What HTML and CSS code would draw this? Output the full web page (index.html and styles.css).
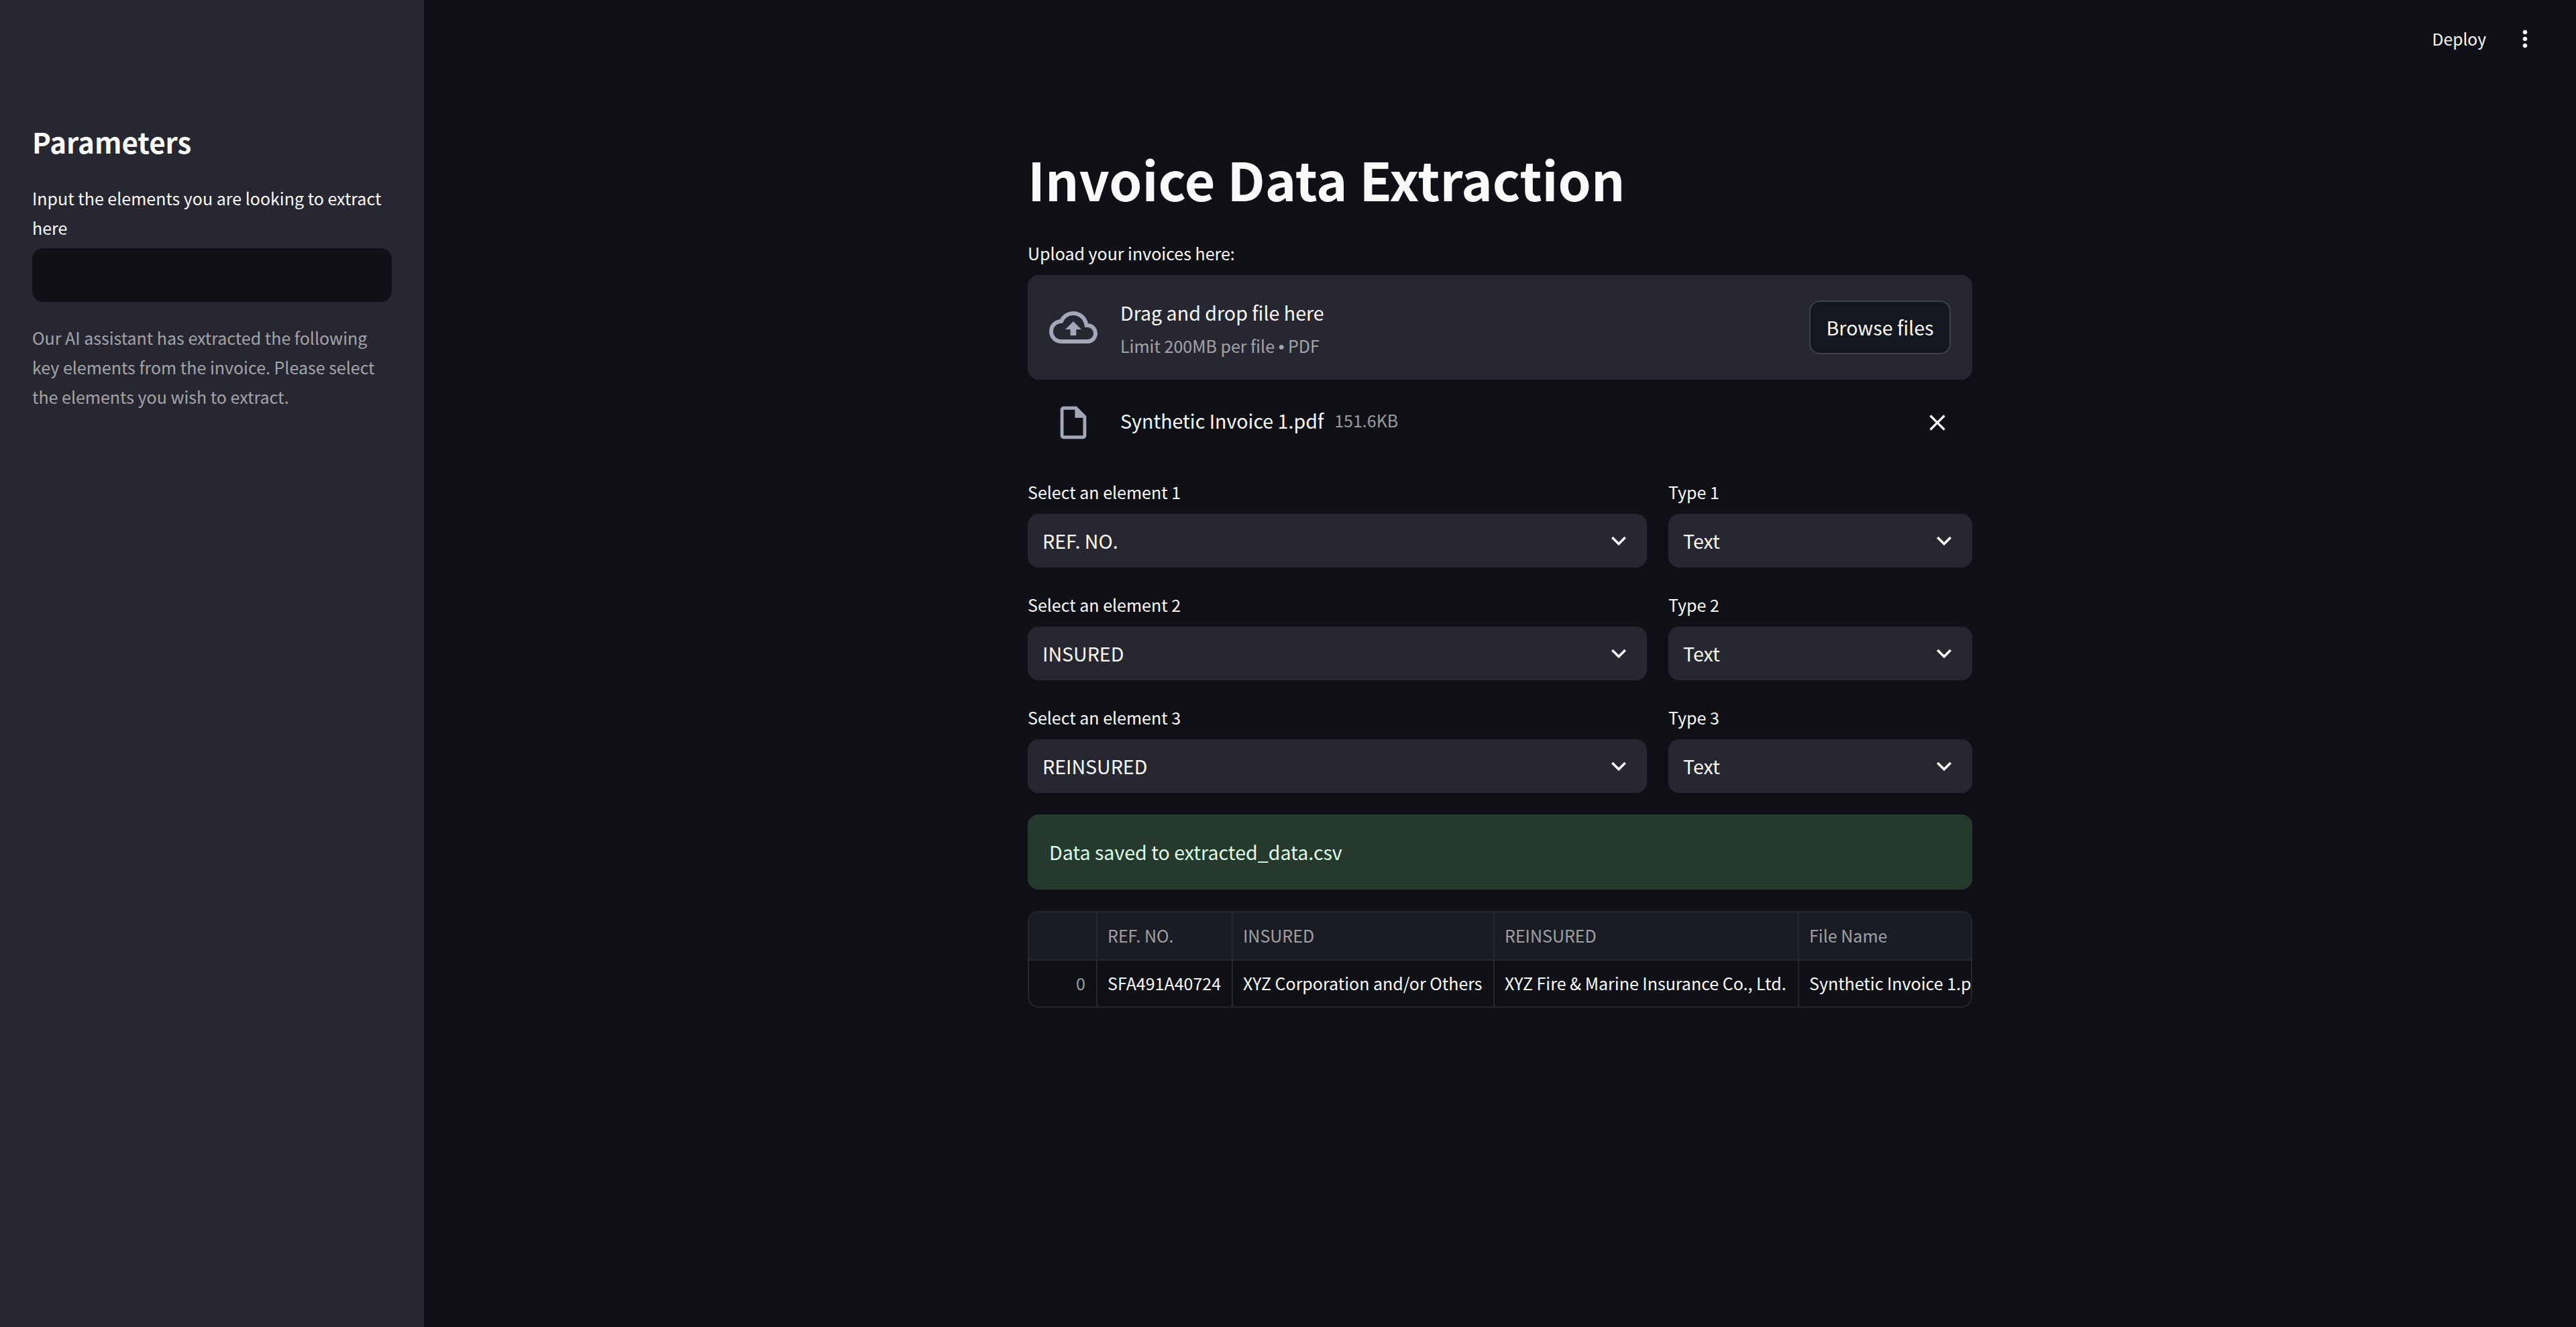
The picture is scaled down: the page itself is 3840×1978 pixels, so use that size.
FILE: index.html
```html
<!DOCTYPE html>
<html lang="en">
<head>
    <meta charset="UTF-8">
    <title>Invoice Data Extraction</title>
    <link rel="stylesheet" href="styles.css">
</head>
<body>
    <div class="app">
        <aside class="sidebar">
            <h2 class="side-title">Parameters</h2>
            <label class="side-label">Input the elements you are looking to extract here</label>
            <div class="side-input"></div>
            <p class="side-note">Our AI assistant has extracted the following key elements from the invoice. Please select the elements you wish to extract.</p>
        </aside>

        <main class="main">
            <header class="topbar">
                <span class="deploy">Deploy</span>
                <svg class="icon-more" viewBox="0 0 24 24"><path d="M12 8c1.1 0 2-.9 2-2s-.9-2-2-2-2 .9-2 2 .9 2 2 2zm0 2c-1.1 0-2 .9-2 2s.9 2 2 2 2-.9 2-2-.9-2-2-2zm0 6c-1.1 0-2 .9-2 2s.9 2 2 2 2-.9 2-2-.9-2-2-2z"/></svg>
            </header>

            <div class="content">
                <h1 class="title">Invoice Data Extraction</h1>

                <div class="field-label upload-label">Upload your invoices here:</div>
                <div class="uploader">
                    <svg class="icon-cloud" viewBox="0 0 24 24"><path d="M19.35 10.04C18.67 6.59 15.64 4 12 4 9.11 4 6.6 5.64 5.35 8.04 2.34 8.36 0 10.91 0 14c0 3.31 2.69 6 6 6h13c2.76 0 5-2.24 5-5 0-2.64-2.05-4.78-4.65-4.96zM19 18H6c-2.21 0-4-1.79-4-4 0-2.05 1.53-3.76 3.56-3.97l1.07-.11.5-.95C8.08 7.14 9.94 6 12 6c2.62 0 4.88 1.86 5.39 4.43l.3 1.5 1.53.11c1.56.1 2.78 1.41 2.78 2.96 0 1.65-1.35 3-3 3zM8 13h2.55v3h2.9v-3H16l-4-4z"/></svg>
                    <div class="uploader-text">
                        <div class="drop-title">Drag and drop file here</div>
                        <div class="drop-limit">Limit 200MB per file <span class="dot">•</span> PDF</div>
                    </div>
                    <button class="browse">Browse files</button>
                </div>

                <div class="file-row">
                    <svg class="icon-file" viewBox="0 0 24 24"><path d="M14 2H6c-1.1 0-1.99.9-1.99 2L4 20c0 1.1.89 2 1.99 2H18c1.1 0 2-.9 2-2V8l-6-6zM6 20V4h7v5h5v11H6z"/></svg>
                    <span class="file-name">Synthetic Invoice 1.pdf</span>
                    <span class="file-size">151.6KB</span>
                    <svg class="icon-close" viewBox="0 0 24 24"><path d="M19 6.41L17.59 5 12 10.59 6.41 5 5 6.41 10.59 12 5 17.59 6.41 19 12 13.41 17.59 19 19 17.59 13.41 12z"/></svg>
                </div>

                <div class="select-grid">
                    <div class="select-col">
                        <div class="field-label">Select an element 1</div>
                        <div class="select"><span>REF. NO.</span><svg class="icon-chevron" viewBox="0 0 24 24"><path d="M7.41 8.59L12 13.17l4.59-4.58L18 10l-6 6-6-6z"/></svg></div>
                    </div>
                    <div class="select-col">
                        <div class="field-label">Type 1</div>
                        <div class="select"><span>Text</span><svg class="icon-chevron" viewBox="0 0 24 24"><path d="M7.41 8.59L12 13.17l4.59-4.58L18 10l-6 6-6-6z"/></svg></div>
                    </div>
                    <div class="select-col">
                        <div class="field-label">Select an element 2</div>
                        <div class="select"><span>INSURED</span><svg class="icon-chevron" viewBox="0 0 24 24"><path d="M7.41 8.59L12 13.17l4.59-4.58L18 10l-6 6-6-6z"/></svg></div>
                    </div>
                    <div class="select-col">
                        <div class="field-label">Type 2</div>
                        <div class="select"><span>Text</span><svg class="icon-chevron" viewBox="0 0 24 24"><path d="M7.41 8.59L12 13.17l4.59-4.58L18 10l-6 6-6-6z"/></svg></div>
                    </div>
                    <div class="select-col">
                        <div class="field-label">Select an element 3</div>
                        <div class="select"><span>REINSURED</span><svg class="icon-chevron" viewBox="0 0 24 24"><path d="M7.41 8.59L12 13.17l4.59-4.58L18 10l-6 6-6-6z"/></svg></div>
                    </div>
                    <div class="select-col">
                        <div class="field-label">Type 3</div>
                        <div class="select"><span>Text</span><svg class="icon-chevron" viewBox="0 0 24 24"><path d="M7.41 8.59L12 13.17l4.59-4.58L18 10l-6 6-6-6z"/></svg></div>
                    </div>
                </div>

                <div class="success">Data saved to extracted_data.csv</div>

                <div class="table-wrap">
                    <table class="data-table">
                        <colgroup>
                            <col class="col-index">
                            <col class="col-ref">
                            <col class="col-insured">
                            <col class="col-reinsured">
                            <col class="col-file">
                        </colgroup>
                        <thead>
                            <tr>
                                <th></th>
                                <th>REF. NO.</th>
                                <th>INSURED</th>
                                <th>REINSURED</th>
                                <th>File Name</th>
                            </tr>
                        </thead>
                        <tbody>
                            <tr>
                                <td class="row-index">0</td>
                                <td>SFA491A40724</td>
                                <td>XYZ Corporation and/or Others</td>
                                <td>XYZ Fire &amp; Marine Insurance Co., Ltd.</td>
                                <td>Synthetic Invoice 1.pdf</td>
                            </tr>
                        </tbody>
                    </table>
                </div>
            </div>
        </main>
    </div>
</body>
</html>
```

FILE: styles.css
```css
* {
    margin: 0;
    padding: 0;
    box-sizing: border-box;
}

body {
    background: #0f1116;
    color: #fafafa;
    font-family: "Noto Sans CJK SC", "Source Sans Pro", "Open Sans", sans-serif;
    font-size: 28.6px;
}

.app {
    display: flex;
    height: 1978px;
    overflow: hidden;
}

/* sidebar */
.sidebar {
    width: 632px;
    flex-shrink: 0;
    background: #262730;
    padding: 179px 48px 0;
}

.side-title {
    font-size: 42px;
    line-height: 64px;
    font-weight: 600;
}

.side-label {
    display: block;
    margin-top: 30px;
    font-size: 25px;
    line-height: 44px;
}

.side-input {
    height: 80px;
    margin-top: 9px;
    background: #0f1116;
    border-radius: 16px;
}

.side-note {
    margin-top: 31px;
    font-size: 25px;
    line-height: 44px;
    color: rgba(250, 250, 250, 0.6);
}

/* main */
.main {
    flex: 1;
    min-width: 0;
}

.topbar {
    height: 116px;
    display: flex;
    align-items: center;
    justify-content: flex-end;
    padding-right: 56px;
}

.deploy {
    font-size: 24.6px;
    margin-right: 38px;
    margin-bottom: 2px;
}

.icon-more {
    width: 40px;
    height: 40px;
    fill: #fafafa;
}

.content {
    width: 1408px;
    margin: 0 auto;
    padding-top: 100px;
}

.title {
    font-size: 78.8px;
    line-height: 100px;
    font-weight: 700;
}

.field-label {
    font-size: 25px;
    line-height: 42px;
    margin-bottom: 12px;
}

.upload-label {
    margin-top: 40px;
}

/* uploader */
.uploader {
    height: 156px;
    display: flex;
    align-items: center;
    padding: 0 32px;
    background: #262730;
    border-radius: 16px;
}

.icon-cloud {
    width: 72px;
    height: 72px;
    fill: #a3a8b8;
    margin-right: 34px;
}

.uploader-text {
    flex: 1;
    padding-top: 5px;
}

.drop-title {
    font-size: 28.6px;
    line-height: 50px;
}

.drop-limit {
    font-size: 25px;
    line-height: 48px;
    color: rgba(250, 250, 250, 0.6);
}

.dot {
    font-family: "Liberation Sans", sans-serif;
}

.browse {
    width: 211px;
    height: 80px;
    padding-bottom: 2px;
    background: #131720;
    color: #fafafa;
    border: 2px solid #3f4149;
    border-radius: 16px;
    font: inherit;
}

.file-row {
    height: 64px;
    margin-top: 32px;
    display: flex;
    align-items: center;
    padding-left: 39px;
}

.icon-file {
    width: 58px;
    height: 58px;
    fill: #a3a8b8;
    margin-right: 41px;
}

.file-name {
    font-size: 28.6px;
    margin-right: 16px;
    margin-bottom: 8px;
}

.file-size {
    font-size: 25px;
    margin-bottom: 8px;
    color: rgba(250, 250, 250, 0.6);
}

.icon-close {
    width: 40px;
    height: 40px;
    fill: #fafafa;
    margin-left: auto;
    margin-right: 32px;
}

/* selects */
.select-grid {
    display: grid;
    grid-template-columns: 923px 453px;
    column-gap: 32px;
    row-gap: 34px;
    margin-top: 50px;
}

.select {
    height: 80px;
    display: flex;
    align-items: center;
    justify-content: space-between;
    padding: 0 20px 0 22px;
    background: #262730;
    border-radius: 16px;
    font-size: 28.6px;
}

.select span {
    margin-bottom: 2px;
}

.icon-chevron {
    width: 44px;
    height: 44px;
    fill: #fafafa;
}

.success {
    height: 112px;
    margin-top: 32px;
    padding: 0 32px 2px;
    display: flex;
    align-items: center;
    background: #253a2d;
    border-radius: 16px;
    color: #dffde9;
    font-size: 28.6px;
}

/* table */
.table-wrap {
    margin-top: 32px;
    border: 2px solid #25272e;
    border-radius: 16px;
    overflow: hidden;
}

.data-table {
    width: 1404px;
    table-layout: fixed;
    border-collapse: separate;
    border-spacing: 0;
    font-size: 25px;
}

.col-index { width: 102px; }
.col-ref { width: 202px; }
.col-insured { width: 390px; }
.col-reinsured { width: 454px; }
.col-file { width: 256px; }

.data-table th,
.data-table td {
    padding: 0 0 2px 15px;
    text-align: left;
    font-weight: 400;
    white-space: nowrap;
    overflow: hidden;
    border-right: 2px solid #25272e;
}

.data-table th:last-child,
.data-table td:last-child {
    border-right: 0;
}

.data-table th {
    height: 72px;
    background: #1a1c24;
    color: rgba(250, 250, 250, 0.6);
    border-bottom: 2px solid #25272e;
}

.data-table td {
    height: 68px;
}

.data-table .row-index {
    padding: 0 16px 2px 0;
    text-align: right;
    color: rgba(250, 250, 250, 0.6);
}
```
